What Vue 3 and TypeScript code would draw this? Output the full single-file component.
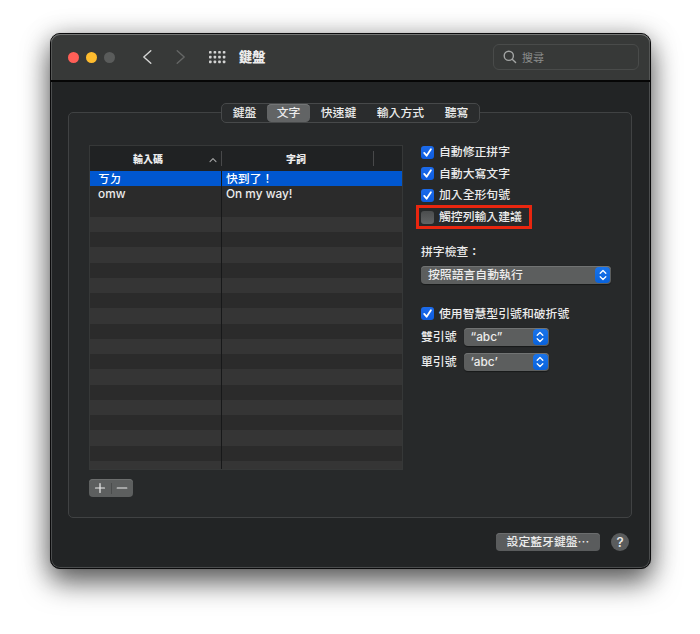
<script setup lang="ts">
import { ref } from 'vue'

interface Tab {
  label: string
  size: string
}

interface Entry {
  code: string
  phrase: string
}

interface Option {
  label: string
  checked: boolean
  marked?: boolean
}

const tabs: Tab[] = [
  { label: '鍵盤', size: 'w46' },
  { label: '文字', size: 'w42' },
  { label: '快速鍵', size: 'w57' },
  { label: '輸入方式', size: 'w67' },
  { label: '聽寫', size: 'w44' },
]
const activeTab = ref('文字')

const entries: Entry[] = [
  { code: 'ㄎㄉ', phrase: '快到了！' },
  { code: 'omw', phrase: 'On my way!' },
]
const selectedEntry = ref(0)
const blankRows = 18

const options = ref<Option[]>([
  { label: '自動修正拼字', checked: true },
  { label: '自動大寫文字', checked: true },
  { label: '加入全形句號', checked: true },
  { label: '觸控列輸入建議', checked: false, marked: true },
])

const quotes = [
  { label: '雙引號', value: '“abc”' },
  { label: '單引號', value: '‘abc’' },
]
const dots = Array.from({ length: 12 }, (_, i) => ({ x: (i % 4) * 4.6, y: Math.floor(i / 4) * 4.8 }))
</script>

<template>
  <main class="desktop">
    <section class="window">
      <header class="toolbar">
        <div class="lights">
          <i class="light close"></i>
          <i class="light minimize"></i>
          <i class="light zoom"></i>
        </div>
        <svg class="back" width="10" height="16" viewBox="0 0 10 16">
          <path d="M8.8 1.8 1.8 8l7 6.2" />
        </svg>
        <svg class="forward" width="10" height="16" viewBox="0 0 10 16">
          <path d="M1.2 1.8 8.2 8l-7 6.2" />
        </svg>
        <svg class="grid" width="17" height="13" viewBox="0 0 17 13">
          <rect v-for="(d, i) in dots" :key="i" :x="d.x" :y="d.y" width="2.6" height="2.6" rx="0.7" />
        </svg>
        <h1 class="title">鍵盤</h1>
        <div class="search">
          <svg width="14" height="14" viewBox="0 0 14 14">
            <circle cx="5.8" cy="5.8" r="4.6" />
            <path d="M9.2 9.2 12.6 12.6" />
          </svg>
          <span>搜尋</span>
        </div>
      </header>

      <div class="content">
        <nav class="tabs">
          <button
            v-for="tab in tabs"
            :key="tab.label"
            class="tab"
            :class="[tab.size, { active: tab.label === activeTab }]"
            @click="activeTab = tab.label"
          >{{ tab.label }}</button>
        </nav>

        <div class="panel">
          <div class="left">
            <div class="table">
              <div class="row head">
                <div class="cell code">
                  <span>輸入碼</span>
                  <svg class="sort" width="8" height="6" viewBox="0 0 8 6"><path d="M1 4.6 4 1.6 7 4.6" /></svg>
                </div>
                <div class="cell phrase">字詞</div>
                <div class="cell rest"></div>
              </div>
              <div class="rows">
                <div
                  v-for="(entry, i) in entries"
                  :key="entry.code"
                  class="row item"
                  :class="{ selected: i === selectedEntry }"
                  @click="selectedEntry = i"
                >
                  <div class="cell code">{{ entry.code }}</div>
                  <div class="cell value">{{ entry.phrase }}</div>
                </div>
                <div v-for="n in blankRows" :key="n" class="row item" :class="{ alt: n % 2 === 0 }">
                  <div class="cell code"></div>
                  <div class="cell value"></div>
                </div>
              </div>
            </div>
            <div class="stepper">
              <svg width="12" height="12" viewBox="0 0 12 12"><path d="M1.5 6h9M6 1.5v9" /></svg>
              <i></i>
              <svg width="12" height="12" viewBox="0 0 12 12"><path d="M1.2 6h9.6" /></svg>
            </div>
          </div>

          <div class="right">
            <div
              v-for="option in options"
              :key="option.label"
              class="option"
              :class="{ marked: option.marked }"
              @click="option.checked = !option.checked"
            >
              <span class="box" :class="{ on: option.checked }">
                <svg v-if="option.checked" width="13" height="13" viewBox="0 0 13 13"><path d="M3.2 6.9 5.6 9.7 9.9 3.2" /></svg>
              </span>
              <span>{{ option.label }}</span>
            </div>

            <div class="label">拼字檢查：</div>
            <div class="select wide">
              <span>按照語言自動執行</span>
              <span class="arrows">
                <svg width="8" height="12" viewBox="0 0 8 12"><path d="M1.2 4.3 4 1.5l2.8 2.8M1.2 7.7 4 10.5l2.8-2.8" /></svg>
              </span>
            </div>

            <div class="option smart">
              <span class="box on">
                <svg width="13" height="13" viewBox="0 0 13 13"><path d="M3.2 6.9 5.6 9.7 9.9 3.2" /></svg>
              </span>
              <span>使用智慧型引號和破折號</span>
            </div>
            <div v-for="quote in quotes" :key="quote.label" class="quote">
              <span>{{ quote.label }}</span>
              <div class="select small">
                <span>{{ quote.value }}</span>
                <span class="arrows">
                  <svg width="8" height="12" viewBox="0 0 8 12"><path d="M1.2 4.3 4 1.5l2.8 2.8M1.2 7.7 4 10.5l2.8-2.8" /></svg>
                </span>
              </div>
            </div>
          </div>
        </div>

        <footer class="footer">
          <button class="push">設定藍牙鍵盤⋯</button>
          <button class="help">?</button>
        </footer>
      </div>
    </section>
  </main>
</template>

<style>
body {
  background: #fff;
  overflow: hidden;
}
</style>

<style scoped>
* {
  box-sizing: border-box;
}

.desktop {
  width: 700px;
  height: 634px;
  padding: 33px 49px 0 50px;
  font: 500 11.85px/16px Inter, 'Noto Sans CJK TC', sans-serif;
  color: #ececec;
  white-space: nowrap;
}

button {
  padding: 0;
  border: 0;
  font: inherit;
  color: inherit;
  background: none;
}

svg {
  display: block;
  flex: none;
  fill: none;
  stroke-linecap: round;
  stroke-linejoin: round;
}

.window {
  width: 601px;
  height: 536px;
  border: 1px solid #0b0b0c;
  border-radius: 10px;
  background: #222425;
  box-shadow:
    inset 0 0 0 1px #4b4d4e,
    0 0 1px rgba(0, 0, 0, 0.3),
    0 14px 28px rgba(0, 0, 0, 0.56),
    0 2px 26px rgba(0, 0, 0, 0.26);
}

.toolbar {
  display: flex;
  align-items: center;
  height: 48px;
  padding: 0 11px 0 17px;
  border-radius: 9px 9px 0 0;
  border-bottom: 2px solid #060606;
  background: #373938;
  box-shadow: inset 0 1px 0 #747675, inset 1px 0 0 #555756, inset -1px 0 0 #555756;
}

.lights {
  display: flex;
  gap: 7px;
}

.light {
  width: 11px;
  height: 11px;
  border-radius: 50%;
}

.close { background: #ff5f57; }
.minimize { background: #febc2e; }
.zoom { background: #5a5c5b; }

.back, .forward {
  stroke: #d5d6d5;
  stroke-width: 1.4;
}

.back { margin-left: 27px; }

.forward {
  margin-left: 24px;
  stroke: #656766;
}

.grid {
  margin-left: 23px;
  margin-top: 1px;
  fill: #d3d4d3;
}

.title {
  margin: 0 auto 0 13px;
  font-size: 13.2px;
  font-weight: 900;
  line-height: 16px;
}

.search {
  display: flex;
  align-items: center;
  gap: 5px;
  width: 146px;
  height: 26px;
  padding-left: 9px;
  border: 1px solid #494b4a;
  border-radius: 6px;
  font-size: 11px;
  font-weight: 400;
  line-height: 18px;
  color: #8b8d8c;
}

.search span { padding-top: 1px; }

.search svg {
  stroke: #a3a5a4;
  stroke-width: 1.4;
}

.content {
  display: flex;
  flex-direction: column;
  padding: 21px 18px 0 17px;
}

.tabs {
  display: flex;
  align-self: center;
  position: relative;
  z-index: 1;
  height: 20px;
  margin-left: 1px;
  border: 1px solid #47494a;
  border-radius: 5px;
  background: #2a2c2d;
}

.tab {
  height: 18px;
  line-height: 17px;
  text-align: center;
}

.w46 { width: 45px; }
.w42 { width: 43px; }
.w57 { width: 57px; }
.w67 { width: 67px; }
.w44 { width: 45px; }

.tab.active {
  border-radius: 4.5px;
  background: #626465;
  box-shadow: inset 0 1px 0 #737576;
}

.panel {
  display: flex;
  height: 406px;
  margin-top: -11px;
  padding: 32px 0 0 20px;
  border: 1px solid #404243;
  border-radius: 5px;
  background: #27292a;
}

.left {
  width: 314px;
}

.table {
  height: 325px;
  border: 1px solid #363838;
  overflow: hidden;
}

.row {
  display: flex;
}

.head {
  height: 25px;
  align-items: center;
  background: #202223;
  font-size: 10px;
  font-weight: 900;
}

.head .cell {
  display: flex;
  align-items: center;
  justify-content: center;
  height: 15px;
  border-right: 1px solid #48494a;
}

.head .code {
  width: 132px;
  padding-left: 28px;
  justify-content: space-between;
}

.head .code span { margin-left: 15px; }

.head .phrase {
  width: 152px;
  padding-right: 3px;
}

.head .rest { border: 0; }

.sort {
  margin-right: 4px;
  margin-top: 2px;
  stroke: #a5a6a6;
  stroke-width: 1.1;
}

.item {
  height: 15.25px;
  line-height: 16.5px;
  background: #2b2b2b;
}

.item.alt { background: #353535; }

.item.selected {
  background: #0057d0;
  color: #fff;
}

.item .code {
  width: 132px;
  padding-left: 8px;
  border-right: 1px solid #171819;
}

.item .value { padding-left: 4px; }

.stepper {
  display: flex;
  align-items: center;
  justify-content: space-between;
  width: 44px;
  height: 18px;
  margin-top: 9px;
  padding: 0 5px;
  border-radius: 4px;
  background: #5d5f5f;
  box-shadow: inset 0 1px 0 #6c6e6e;
}

.stepper i {
  width: 1px;
  height: 11px;
  background: #4a4c4c;
}

.stepper svg {
  stroke: #ededed;
  stroke-width: 1.2;
}

.right {
  display: flex;
  flex-direction: column;
  align-items: flex-start;
  padding-left: 18px;
}

.option {
  display: flex;
  align-items: center;
  gap: 5px;
  height: 21.5px;
}

.option:first-child { margin-top: -3.5px; }

.marked {
  height: 24px;
  width: 116px;
  margin: -1px 0 0 -5px;
  padding-left: 2px;
  border: 3px solid #e9260f;
}

.box {
  width: 13px;
  height: 13px;
  border-radius: 3px;
  background: linear-gradient(#4b4d4e, #626465);
}

.box.on { background: linear-gradient(#1c6bea, #0d5ce0); }

.box svg {
  stroke: #fff;
  stroke-width: 1.8;
}

.label {
  margin-top: 15px;
}

.select {
  display: flex;
  align-items: center;
  justify-content: space-between;
  height: 18px;
  padding: 0 1px 0 7px;
  border-radius: 4px;
  background: #5c5e5e;
  box-shadow: inset 0 1px 0 #717373, 0 0.5px 1px rgba(0, 0, 0, 0.4);
}

.wide {
  width: 190px;
  margin-top: 6px;
}

.small { width: 85px; }

.arrows {
  display: flex;
  align-items: center;
  justify-content: center;
  width: 15px;
  height: 16px;
  border-radius: 4px;
  background: linear-gradient(#1a74ea, #0862dc);
}

.arrows svg {
  stroke: #fff;
  stroke-width: 1.3;
}

.smart { margin-top: 19px; }

.quote {
  display: flex;
  align-items: center;
  gap: 7px;
  height: 25px;
}

.footer {
  display: flex;
  align-items: center;
  justify-content: flex-end;
  gap: 11px;
  padding: 15px 3px 0 0;
}

.push {
  width: 104px;
  height: 18px;
  border-radius: 4px;
  background: #5a5c5d;
  box-shadow: inset 0 1px 0 #6b6d6e;
  line-height: 18px;
}

.help {
  width: 18px;
  height: 18px;
  border-radius: 50%;
  background: #5a5c5d;
  font-size: 13.5px;
  line-height: 18px;
}
</style>
